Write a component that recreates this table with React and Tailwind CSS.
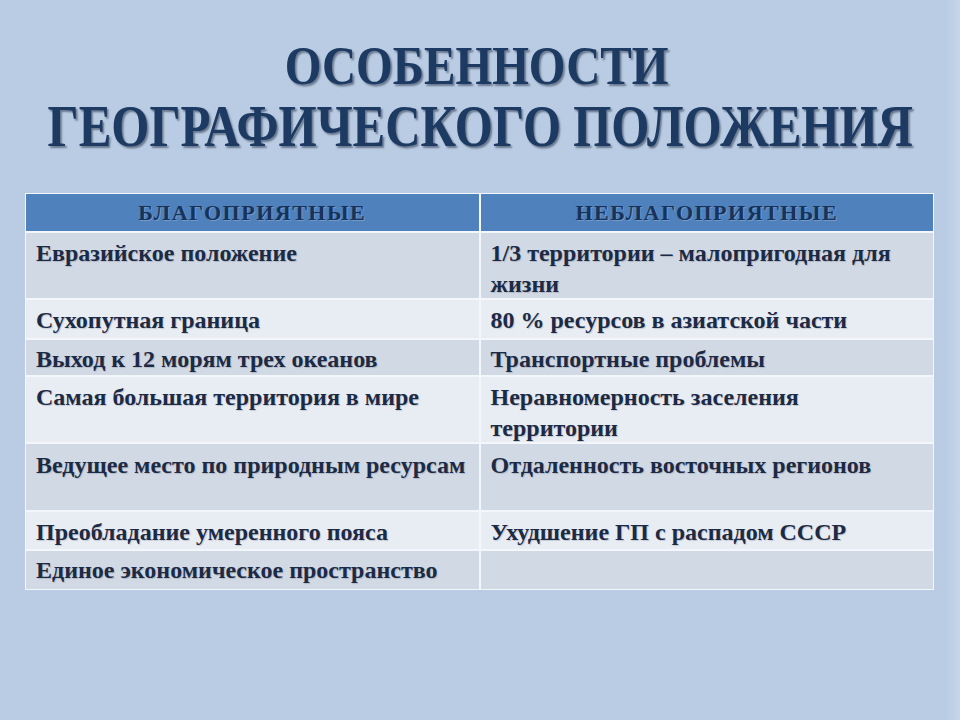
import React from "react";

const rows = [
  { left: "Евразийское положение", right: ["1/3 территории – малопригодная для", "жизни"], h: "h-[65px]", pad: "pt-[5px]", bg: "bg-[#d1d9e5]" },
  { left: "Сухопутная граница", right: ["80 % ресурсов в азиатской части"], h: "h-[38px]", pad: "pt-[5px]", bg: "bg-[#e8ecf3]" },
  { left: "Выход к 12 морям трех океанов", right: ["Транспортные проблемы"], h: "h-[35px]", pad: "pt-[4px]", bg: "bg-[#d1d9e5]" },
  { left: "Самая большая территория в мире", right: ["Неравномерность заселения", "территории"], h: "h-[65px]", pad: "pt-[5px]", bg: "bg-[#e8ecf3]" },
  { left: "Ведущее место по природным ресурсам", right: ["Отдаленность восточных регионов"], h: "h-[66px]", pad: "pt-[6px]", bg: "bg-[#d1d9e5]" },
  { left: "Преобладание умеренного пояса", right: ["Ухудшение ГП с распадом СССР"], h: "h-[37px]", pad: "pt-[5px]", bg: "bg-[#e8ecf3]" },
  { left: "Единое экономическое пространство", right: [], h: "h-[38px]", pad: "pt-[4px]", bg: "bg-[#d1d9e5]" },
];

const Cell = ({ lines, pad, bg, h }) => (
  <div className={`${bg} ${h} overflow-hidden pl-[10px] pr-[4px]`}>
    <div className={`${pad} leading-[31px]`}>
      {lines.map((l, i) => (
        <div key={i} className="whitespace-nowrap">{l}</div>
      ))}
    </div>
  </div>
);

export default function App() {
  return (
    <div className="relative h-[720px] w-[960px] overflow-hidden bg-[#b9cce3] font-['Liberation_Serif',serif]">
      <div className="absolute right-0 top-0 h-full w-[14px] bg-gradient-to-r from-[#b9cce3] to-[#c6d6ea]" />

      {/* title */}
      <div className="flex flex-col items-center pt-[36px] font-bold text-[#1d3a62] [text-shadow:2px_2px_2px_rgba(10,20,40,0.45)]">
        <div className="ml-[-6px] scale-x-[0.874] whitespace-nowrap text-[54px] leading-[60px]">ОСОБЕННОСТИ</div>
        <div className="scale-x-[0.816] whitespace-nowrap text-[60px] leading-[61px]">ГЕОГРАФИЧЕСКОГО ПОЛОЖЕНИЯ</div>
      </div>

      {/* table */}
      <div className="ml-[25px] mt-[36px] flex w-[909px] flex-col gap-[2px] bg-[#f3f7fb] p-[1px] text-[24px] font-bold text-[#1b2a45] [text-shadow:1px_1px_1px_rgba(0,0,0,0.15)]">
        <div className="grid h-[37px] grid-cols-2 gap-[2px]">
          <div className="flex items-center justify-center bg-[#4f81bd] text-[22px] tracking-[1.5px] text-[#17335a] [text-shadow:1px_1px_0_rgba(255,255,255,0.2)]">
            БЛАГОПРИЯТНЫЕ
          </div>
          <div className="flex items-center justify-center bg-[#4f81bd] text-[22px] tracking-[1.5px] text-[#17335a] [text-shadow:1px_1px_0_rgba(255,255,255,0.2)]">
            НЕБЛАГОПРИЯТНЫЕ
          </div>
        </div>
        {rows.map((r, i) => (
          <div key={i} className="grid grid-cols-2 gap-[2px]">
            <Cell lines={[r.left]} pad={r.pad} bg={r.bg} h={r.h} />
            <Cell lines={r.right} pad={r.pad} bg={r.bg} h={r.h} />
          </div>
        ))}
      </div>
    </div>
  );
}
